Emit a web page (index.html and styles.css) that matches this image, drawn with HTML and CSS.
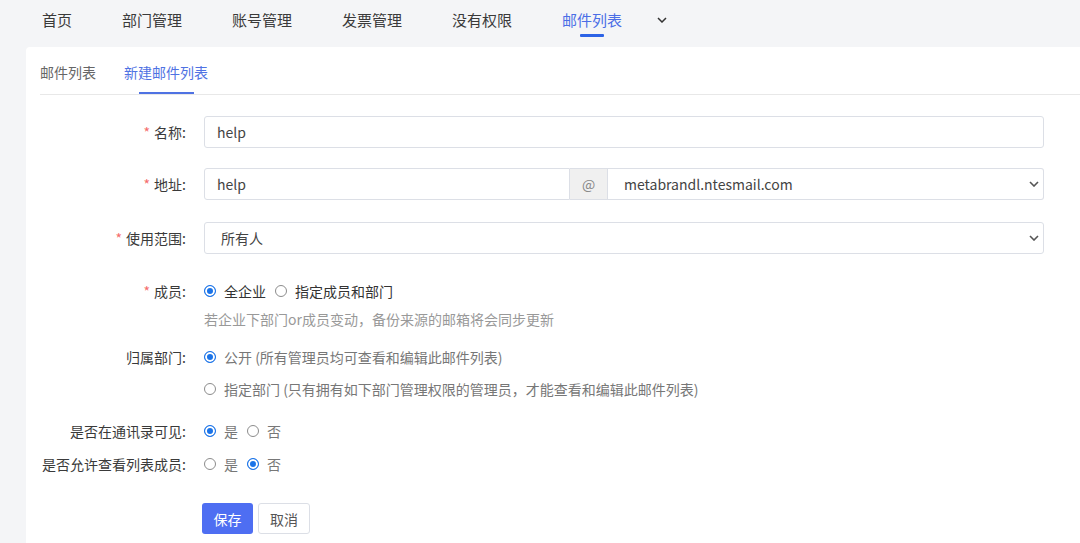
FILE: index.html
```html
<!DOCTYPE html>
<html lang="zh-CN">
<head>
    <meta charset="UTF-8">
    <meta name="viewport" content="width=device-width, initial-scale=1.0">
    <title>新建邮件列表</title>
    <link rel="stylesheet" href="styles.css">
</head>
<body>
    <nav class="topnav">
        <ul class="nav-list">
            <li class="nav-item">首页</li>
            <li class="nav-item">部门管理</li>
            <li class="nav-item">账号管理</li>
            <li class="nav-item">发票管理</li>
            <li class="nav-item">没有权限</li>
            <li class="nav-item active">邮件列表<i class="nav-bar"></i></li>
        </ul>
        <span class="nav-more">
            <svg width="10" height="6" viewBox="0 0 10 6"><path d="M1 1 L5 5 L9 1" fill="none" stroke="#333" stroke-width="1.5"/></svg>
        </span>
    </nav>

    <main class="card">
        <div class="tabs">
            <div class="tab">邮件列表<i class="tab-bar"></i></div>
            <div class="tab active">新建邮件列表<i class="tab-bar"></i></div>
        </div>

        <form class="form">
            <div class="form-item item-name">
                <label class="form-label"><em>*</em>名称:</label>
                <input class="input" type="text" value="help">
            </div>

            <div class="form-item item-address">
                <label class="form-label"><em>*</em>地址:</label>
                <div class="address-group">
                    <input class="input input-local" type="text" value="help">
                    <span class="addon">@</span>
                    <div class="select select-domain">
                        <span>metabrandl.ntesmail.com</span>
                        <svg width="10" height="6" viewBox="0 0 10 6"><path d="M1 1 L5 5 L9 1" fill="none" stroke="#555" stroke-width="1.6"/></svg>
                    </div>
                </div>
            </div>

            <div class="form-item item-scope">
                <label class="form-label"><em>*</em>使用范围:</label>
                <div class="select">
                    <span>所有人</span>
                    <svg width="10" height="6" viewBox="0 0 10 6"><path d="M1 1 L5 5 L9 1" fill="none" stroke="#555" stroke-width="1.6"/></svg>
                </div>
            </div>

            <div class="form-item top item-members">
                <label class="form-label"><em>*</em>成员:</label>
                <div>
                    <div class="radio-group">
                        <label class="radio"><input type="radio" name="members" checked><span>全企业</span></label>
                        <label class="radio"><input type="radio" name="members"><span>指定成员和部门</span></label>
                    </div>
                    <p class="hint">若企业下部门or成员变动，备份来源的邮箱将会同步更新</p>
                </div>
            </div>

            <div class="form-item top item-dept">
                <label class="form-label">归属部门:</label>
                <div>
                    <label class="radio muted"><input type="radio" name="dept" checked><span>公开 (所有管理员均可查看和编辑此邮件列表)</span></label>
                    <label class="radio muted second"><input type="radio" name="dept"><span>指定部门 (只有拥有如下部门管理权限的管理员，才能查看和编辑此邮件列表)</span></label>
                </div>
            </div>

            <div class="form-item item-contacts">
                <label class="form-label">是否在通讯录可见:</label>
                <div class="radio-group">
                    <label class="radio muted"><input type="radio" name="contacts" checked><span>是</span></label>
                    <label class="radio muted"><input type="radio" name="contacts"><span>否</span></label>
                </div>
            </div>

            <div class="form-item item-allow">
                <label class="form-label">是否允许查看列表成员:</label>
                <div class="radio-group">
                    <label class="radio muted"><input type="radio" name="allow"><span>是</span></label>
                    <label class="radio muted"><input type="radio" name="allow" checked><span>否</span></label>
                </div>
            </div>

            <div class="form-item item-actions">
                <span></span>
                <div class="actions">
                    <button type="submit" class="btn btn-primary">保存</button>
                    <button type="button" class="btn btn-default">取消</button>
                </div>
            </div>
        </form>
    </main>
</body>
</html>
```

FILE: styles.css
```css
* {
    margin: 0;
    padding: 0;
    box-sizing: border-box;
    font-family: "Noto Sans CJK SC", "Microsoft YaHei", sans-serif;
}

body {
    width: 1080px;
    height: 543px;
    overflow: hidden;
    background: #f4f5f7;
    color: #333;
    font-size: 14px;
}

/* top navigation */
.topnav {
    display: flex;
    align-items: flex-start;
    height: 47px;
    padding-left: 42px;
}

.nav-list {
    display: flex;
    gap: 50px;
    list-style: none;
}

.nav-item {
    display: flex;
    flex-direction: column;
    align-items: center;
    padding-top: 10px;
    font-size: 15px;
    line-height: 20px;
    color: #3a3a3a;
}

.nav-item.active {
    color: #4b6ee6;
}

.nav-bar {
    width: 24px;
    height: 3px;
    margin-top: 4px;
    background: #2c63e6;
    border-radius: 1px;
}

.nav-more {
    display: flex;
    margin-left: 35px;
    padding-top: 17px;
}

/* card */
.card {
    margin-left: 26px;
    height: 496px;
    background: #fff;
    border-top-left-radius: 4px;
}

.tabs {
    display: flex;
    gap: 28px;
    margin-left: 14px;
    padding-top: 15px;
    border-bottom: 1px solid #e8e8e8;
}

.tab {
    display: flex;
    flex-direction: column;
    align-items: center;
    font-size: 14px;
    line-height: 20px;
    color: #666;
}

.tab-bar {
    width: 55px;
    height: 2px;
    margin-top: 10px;
}

.tab.active {
    color: #4f72e3;
}

.tab.active .tab-bar {
    background: #4f72e3;
}

/* form */
.form {
    padding: 21px 36px 0 0;
}

.form-item {
    display: grid;
    grid-template-columns: 160px 1fr;
    column-gap: 18px;
    align-items: center;
}

.form-item.top {
    align-items: start;
}

.form-label {
    text-align: right;
    line-height: 20px;
    color: #3a3a3a;
}

.form-label em {
    font-style: normal;
    color: #f56c6c;
    margin-right: 4px;
}

.item-name { margin-bottom: 20px; }
.item-address { margin-bottom: 22px; }
.item-scope { margin-bottom: 27px; }
.item-members { margin-bottom: 18px; }
.item-dept { margin-bottom: 22px; }
.item-contacts { margin-bottom: 13px; }
.item-allow { margin-bottom: 29px; }

.input {
    width: 100%;
    height: 32px;
    padding: 0 12px;
    border: 1px solid #dcdfe6;
    border-radius: 3px;
    font-size: 14px;
    color: #444;
    outline: none;
}

.address-group {
    display: flex;
}

.input-local {
    flex: 0 0 366px;
    border-radius: 3px 0 0 3px;
}

.addon {
    flex: 0 0 38px;
    height: 32px;
    display: flex;
    align-items: center;
    justify-content: center;
    background: #f0f0f0;
    border: 1px solid #dcdfe6;
    border-left: none;
    color: #888;
}

.select {
    display: flex;
    align-items: center;
    justify-content: space-between;
    height: 32px;
    padding: 0 4px 0 16px;
    border: 1px solid #dcdfe6;
    border-radius: 3px;
    color: #444;
}

.select-domain {
    flex: 1;
    border-left: none;
    border-radius: 0 3px 3px 0;
}

.radio-group {
    display: flex;
    align-items: center;
}

.radio {
    display: flex;
    align-items: center;
    gap: 8px;
    margin-right: 9px;
    line-height: 20px;
    color: #333;
}

.radio.muted {
    color: #777;
}

.radio.second {
    margin-top: 12px;
}

.radio input {
    appearance: none;
    width: 12px;
    height: 12px;
    border: 1px solid #8c8c8c;
    border-radius: 50%;
    background: #fff;
}

.radio input:checked {
    border-color: #1a73e8;
    background: #1a73e8;
    box-shadow: inset 0 0 0 2px #fff;
}

.hint {
    margin-top: 8px;
    line-height: 20px;
    color: #999;
}

.actions {
    display: flex;
    gap: 5px;
    margin-left: -2px;
}

.btn {
    height: 31px;
    width: 51px;
    border-radius: 3px;
    font-size: 14px;
    cursor: pointer;
}

.btn-primary {
    background: #4e6ef2;
    border: none;
    color: #fff;
}

.btn-default {
    width: 52px;
    background: #fff;
    border: 1px solid #dcdfe6;
    color: #555;
}
```
